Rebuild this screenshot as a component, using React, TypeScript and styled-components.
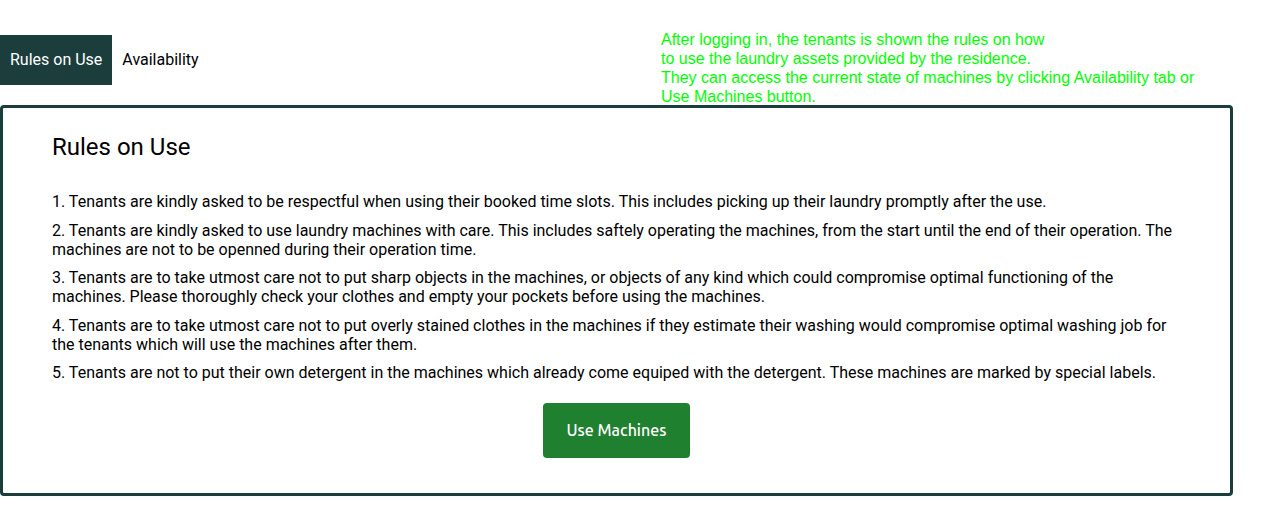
import React from "react";
import styled, { createGlobalStyle } from "styled-components";

const Global = createGlobalStyle`
  html, body { margin: 0; padding: 0; background: #fff; }
  body { font-family: Roboto, "Liberation Sans", sans-serif; color: #000; }
`;

const Page = styled.div`
  position: relative;
  padding-top: 35px;
  width: 1263px;
`;

const Tabs = styled.nav`
  display: flex;
  height: 50px;
`;

const Tab = styled.div<{ $active?: boolean }>`
  display: flex;
  align-items: center;
  padding: 0 10px 2px;
  font-size: 16px;
  background: ${(p) => (p.$active ? "#1b3d3c" : "transparent")};
  color: ${(p) => (p.$active ? "#ffffff" : "#000000")};
`;

const Note = styled.div`
  position: absolute;
  left: 661px;
  top: 30px;
  font-family: "Liberation Sans", Arial, sans-serif;
  font-size: 16px;
  line-height: 19px;
  color: #00ff00;
`;

const Card = styled.section`
  margin-top: 20px;
  width: 1233px;
  box-sizing: border-box;
  border: 3px solid #1b3d3c;
  border-radius: 4px;
  padding: 25px 49px 35px 49px;
  display: flex;
  flex-direction: column;
`;

const Title = styled.h2`
  margin: 0 0 31px;
  font-size: 24px;
  font-weight: 400;
  line-height: 28px;
`;

const Rule = styled.p`
  margin: 0 0 9.6px;
  font-size: 16px;
  line-height: 19px;
`;

const Button = styled.button`
  align-self: center;
  margin-top: 11px;
  width: 147px;
  height: 55px;
  border: none;
  border-radius: 4px;
  background: #1f8030;
  color: #fff;
  font-family: Ubuntu, "Open Sans", sans-serif;
  font-weight: 500;
  font-size: 16px;
`;

const rules = [
  "1. Tenants are kindly asked to be respectful when using their booked time slots. This includes picking up their laundry promptly after the use.",
  "2. Tenants are kindly asked to use laundry machines with care. This includes saftely operating the machines, from the start until the end of their operation. The machines are not to be openned during their operation time.",
  "3. Tenants are to take utmost care not to put sharp objects in the machines, or objects of any kind which could compromise optimal functioning of the machines. Please thoroughly check your clothes and empty your pockets before using the machines.",
  "4. Tenants are to take utmost care not to put overly stained clothes in the machines if they estimate their washing would compromise optimal washing job for the tenants which will use the machines after them.",
  "5. Tenants are not to put their own detergent in the machines which already come equiped with the detergent. These machines are marked by special labels.",
];

export default function App() {
  return (
    <Page>
      <Global />
      <Tabs>
        <Tab $active>Rules on Use</Tab>
        <Tab>Availability</Tab>
      </Tabs>
      <Note>
        After logging in, the tenants is shown the rules on how
        <br />
        to use the laundry assets provided by the residence.
        <br />
        They can access the current state of machines by clicking Availability tab or
        <br />
        Use Machines button.
      </Note>
      <Card>
        <Title>Rules on Use</Title>
        {rules.map((r) => (
          <Rule key={r}>{r}</Rule>
        ))}
        <Button>Use Machines</Button>
      </Card>
    </Page>
  );
}
